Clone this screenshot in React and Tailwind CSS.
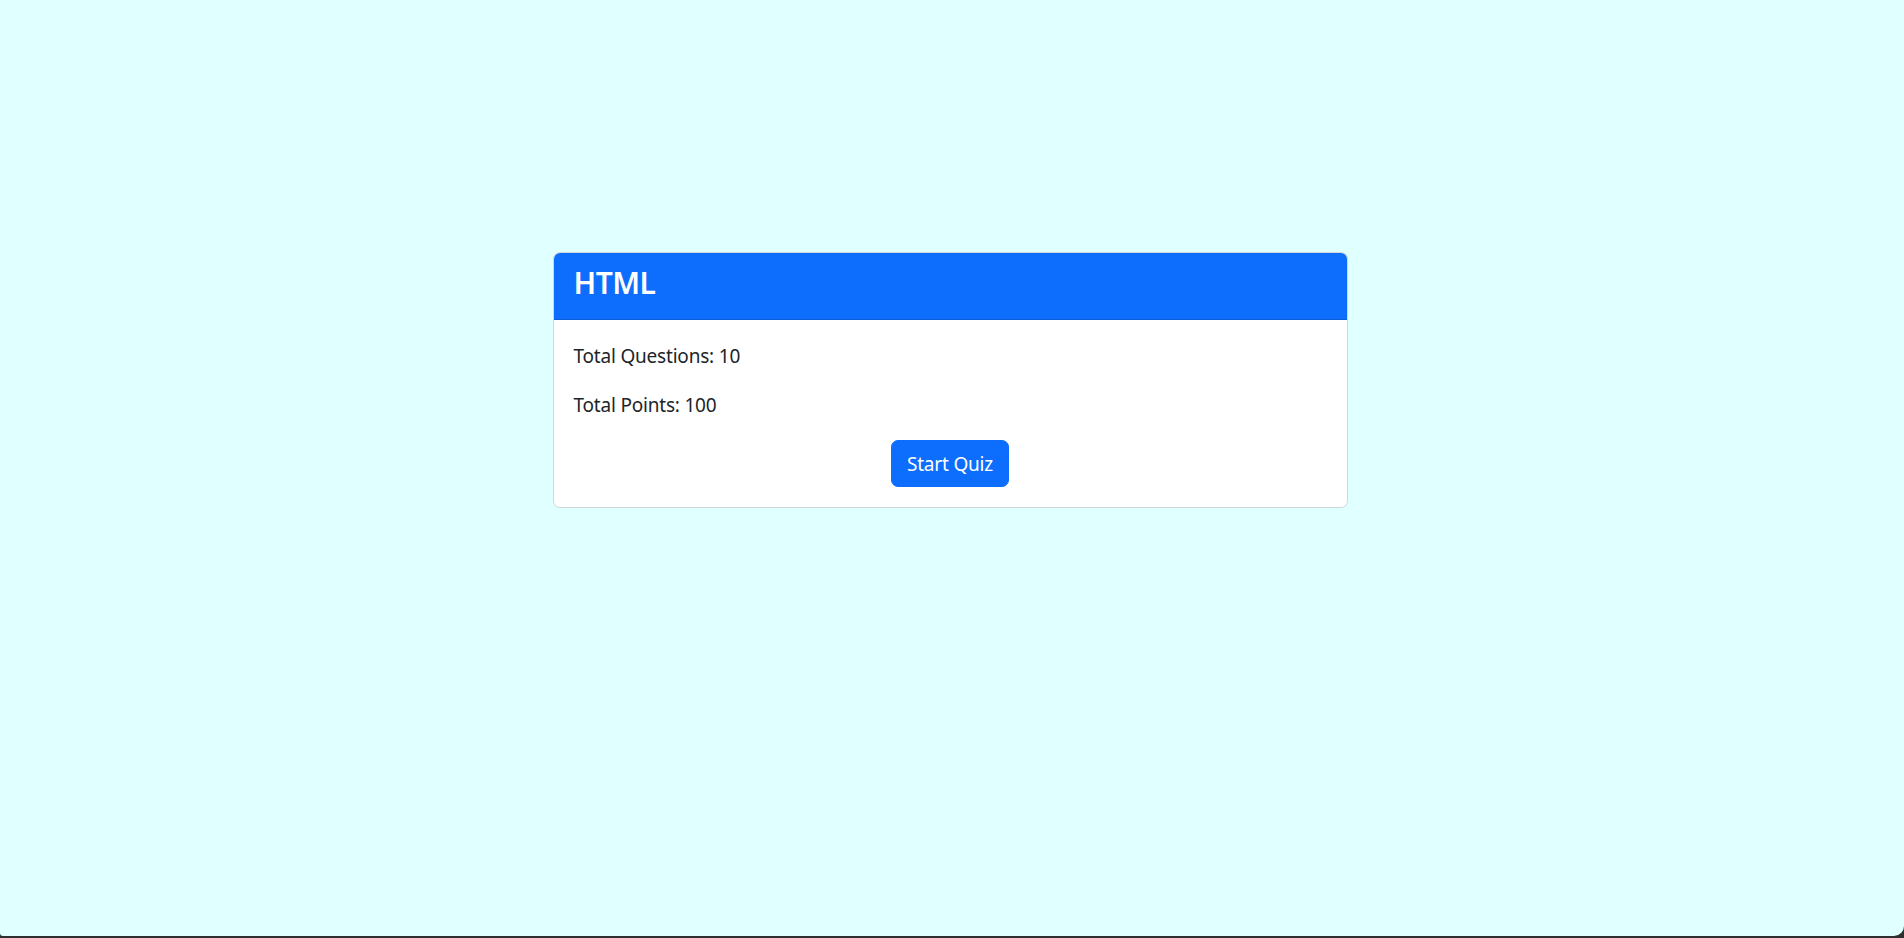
export default function App() {
  return (
    <div className="h-[938px] w-full bg-[#2f2f2f] overflow-hidden" style={{ fontFamily: '"Noto Sans", sans-serif' }}>
      <div className="h-[936px] w-full bg-[#e0ffff] rounded-bl-[3px] rounded-br-[10px] flex justify-center pt-[252px] pr-[4px]">
        <div className="w-[795px] h-fit bg-white border border-[#d0d7db] rounded-[7px] overflow-hidden">
          <div className="h-[67px] bg-[#0d6efd] border-b border-[#0b5ed7] px-[20px] flex items-center">
            <h4 className="text-white text-[30px] font-semibold leading-[36px] pb-[6px] tracking-[-0.5px]">HTML</h4>
          </div>
          <div className="p-[20px] text-[19px] tracking-[-0.2px] leading-[30px] text-[#212529]">
            <p className="pt-[1px] mb-[19px]">Total Questions: 10</p>
            <p className="mb-[20px]">Total Points: 100</p>
            <div className="flex justify-center">
              <button className="bg-[#0d6efd] text-white text-[19px] tracking-[-0.2px] leading-[30px] px-[15px] py-[7.5px] border border-[#0d6efd] rounded-[7px]">Start Quiz</button>
            </div>
          </div>
        </div>
      </div>
    </div>
  );
}
